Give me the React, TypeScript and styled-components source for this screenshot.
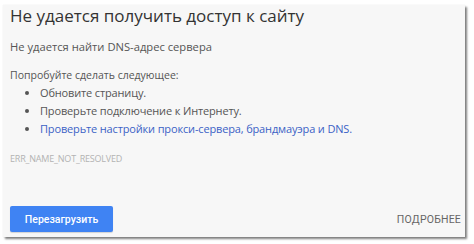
import React from "react";
import styled, { createGlobalStyle } from "styled-components";

const Global = createGlobalStyle`
  html, body { margin: 0; padding: 0; background: #ffffff; }
  body { width: 474px; height: 244px; overflow: hidden; font-family: "Open Sans", "Noto Sans", sans-serif; }
`;

const Page = styled.div`
  padding: 5px 9px 7px 3px;
  width: 474px;
  height: 244px;
  box-sizing: border-box;
`;

const Card = styled.div`
  background: #f7f7f7;
  height: 100%;
  box-sizing: border-box;
  padding: 0 4px 5px 7px;
  display: flex;
  flex-direction: column;
  box-shadow: 2px 2px 2px rgba(0, 0, 0, 0.5), 0 0 1px rgba(0, 0, 0, 0.1);
`;

const Title = styled.h1`
  margin: 0;
  font-size: 17px;
  font-weight: 400;
  color: #333;
  line-height: 21px;
`;

const Text = styled.p<{ $size: number; $spacing: number }>`
  margin: 0;
  font-size: ${(p) => p.$size}px;
  letter-spacing: ${(p) => p.$spacing}px;
  color: #555;
  line-height: 16px;
`;

const Sub = styled(Text)`
  margin-top: 13px;
`;

const Try = styled(Text)`
  margin-top: 12px;
`;

const List = styled.ul`
  margin: 1px 0 0 0;
  padding-left: 30px;
  font-size: 11px;
  letter-spacing: -0.15px;
  line-height: 18px;
  color: #555;
`;

const Item = styled.li<{ $link?: boolean }>`
  color: ${(p) => (p.$link ? "#3b62c6" : "#555")};
  &::marker { color: #555; }
`;

const Code = styled.div`
  margin-top: 15px;
  font-size: 9px;
  letter-spacing: -0.2px;
  color: #b3b3b3;
  line-height: 12px;
`;

const Footer = styled.div`
  margin-top: auto;
  display: flex;
  justify-content: space-between;
  align-items: center;
`;

const Button = styled.button`
  width: 103px;
  height: 26px;
  border: none;
  border-radius: 2px;
  background: #3f83f3;
  color: #fff;
  font-family: "Roboto", sans-serif;
  font-size: 10.5px;
  font-weight: 500;
  padding: 0;
  box-shadow: 0 1px 1px rgba(0, 0, 0, 0.15);
`;

const More = styled.span`
  font-family: "Roboto", sans-serif;
  font-size: 10.5px;
  letter-spacing: 0.2px;
  color: #666;
`;

export default function App() {
  return (
    <>
      <Global />
      <Page>
        <Card>
          <Title>Не удается получить доступ к сайту</Title>
          <Sub $size={11.2} $spacing={0}>Не удается найти DNS-адрес сервера</Sub>
          <Try $size={10.5} $spacing={0}>Попробуйте сделать следующее:</Try>
          <List>
            <Item>Обновите страницу.</Item>
            <Item>Проверьте подключение к Интернету.</Item>
            <Item $link>Проверьте настройки прокси-сервера, брандмауэра и DNS.</Item>
          </List>
          <Code>ERR_NAME_NOT_RESOLVED</Code>
          <Footer>
            <Button>Перезагрузить</Button>
            <More>ПОДРОБНЕЕ</More>
          </Footer>
        </Card>
      </Page>
    </>
  );
}
